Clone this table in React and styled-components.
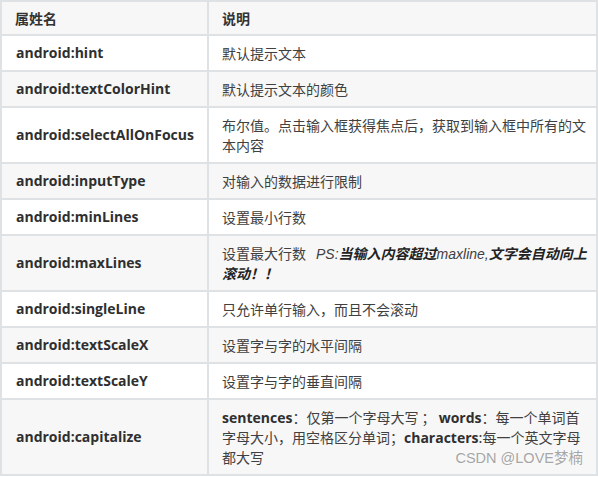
import styled, { createGlobalStyle } from "styled-components";

const GlobalStyle = createGlobalStyle`
  body {
    margin: 0;
    background: #ffffff;
  }
`

const Page = styled.div`
  position: relative;
  width: 598px;
  font-family: "Open Sans", "Noto Sans CJK SC", sans-serif;
  color: #333333;
`

const Table = styled.table`
  width: 598px;
  table-layout: fixed;
  border-collapse: collapse;
  font-size: 14px;
  line-height: 20px;
`

const Row = styled.tr`
  background: ${(props) => (props.$striped ? "#f7f7f7" : "#ffffff")};
`

const HeadCell = styled.th`
  border: 2px solid #dee2e5;
  padding: 6px 6px 6px 13px;
  text-align: left;
  font-weight: 700;
  font-family: "Noto Sans CJK SC", sans-serif;
  color: #333333;
`

const NameCell = styled.td`
  border: 2px solid #dee2e5;
  padding: 7px 6px 7px 14px;
  font-weight: 700;
  color: #2f2f2f;
  vertical-align: middle;
`

const DescCell = styled.td`
  border: 2px solid #dee2e5;
  padding: 7px 6px 7px 13px;
  font-family: "Noto Sans CJK SC", sans-serif;
  font-weight: 400;
  color: #404040;
  vertical-align: middle;
`

const Strong = styled.b`
  font-family: "Open Sans", "Noto Sans CJK SC", sans-serif;
  font-weight: 700;
  line-height: 14px;
  color: #2f2f2f;
`

const Note = styled.i`
  font-family: "Liberation Sans", "Noto Sans CJK SC", sans-serif;
  font-style: italic;
  line-height: 14px;
  margin-left: 10px;
`

const Emph = styled.b`
  font-family: "Noto Sans CJK SC", sans-serif;
  font-weight: 700;
  line-height: 14px;
  color: #222222;
`

const Watermark = styled.div`
  position: absolute;
  right: 15px;
  bottom: 9px;
  font-family: "Liberation Sans", "Noto Sans CJK SC", sans-serif;
  font-size: 14.5px;
  color: #a6a6a6;
  text-shadow: 0 0 2px #ffffff;
`

const rows = [
  ["android:hint", "默认提示文本"],
  ["android:textColorHint", "默认提示文本的颜色"],
  ["android:selectAllOnFocus", "布尔值。点击输入框获得焦点后，获取到输入框中所有的文本内容"],
  ["android:inputType", "对输入的数据进行限制"],
  ["android:minLines", "设置最小行数"],
  [
    "android:maxLines",
    <>
      设置最大行数
      <Note>
        PS:<Emph>当输入内容超过</Emph>maxline,<Emph>文字会自动向上滚动！！</Emph>
      </Note>
    </>,
  ],
  ["android:singleLine", "只允许单行输入，而且不会滚动"],
  ["android:textScaleX", "设置字与字的水平间隔"],
  ["android:textScaleY", "设置字与字的垂直间隔"],
  [
    "android:capitalize",
    <>
      <Strong>sentences</Strong>：仅第一个字母大写 ； <Strong>words</Strong>：每一个单词首字母大小，用空格区分单词；<Strong>characters</Strong>:每一个英文字母都大写
    </>,
  ],
]

const App = () => {
  return (
    <Page>
      <GlobalStyle />
      <Table>
        <colgroup>
          <col style={{ width: "207px" }} />
          <col />
        </colgroup>
        <thead>
          <Row $striped>
            <HeadCell>属姓名</HeadCell>
            <HeadCell>说明</HeadCell>
          </Row>
        </thead>
        <tbody>
          {rows.map(([name, desc], i) => (
            <Row key={name} $striped={i % 2 === 1}>
              <NameCell>{name}</NameCell>
              <DescCell>{desc}</DescCell>
            </Row>
          ))}
        </tbody>
      </Table>
      <Watermark>CSDN @LOVE梦楠</Watermark>
    </Page>
  )
}

export default App;
